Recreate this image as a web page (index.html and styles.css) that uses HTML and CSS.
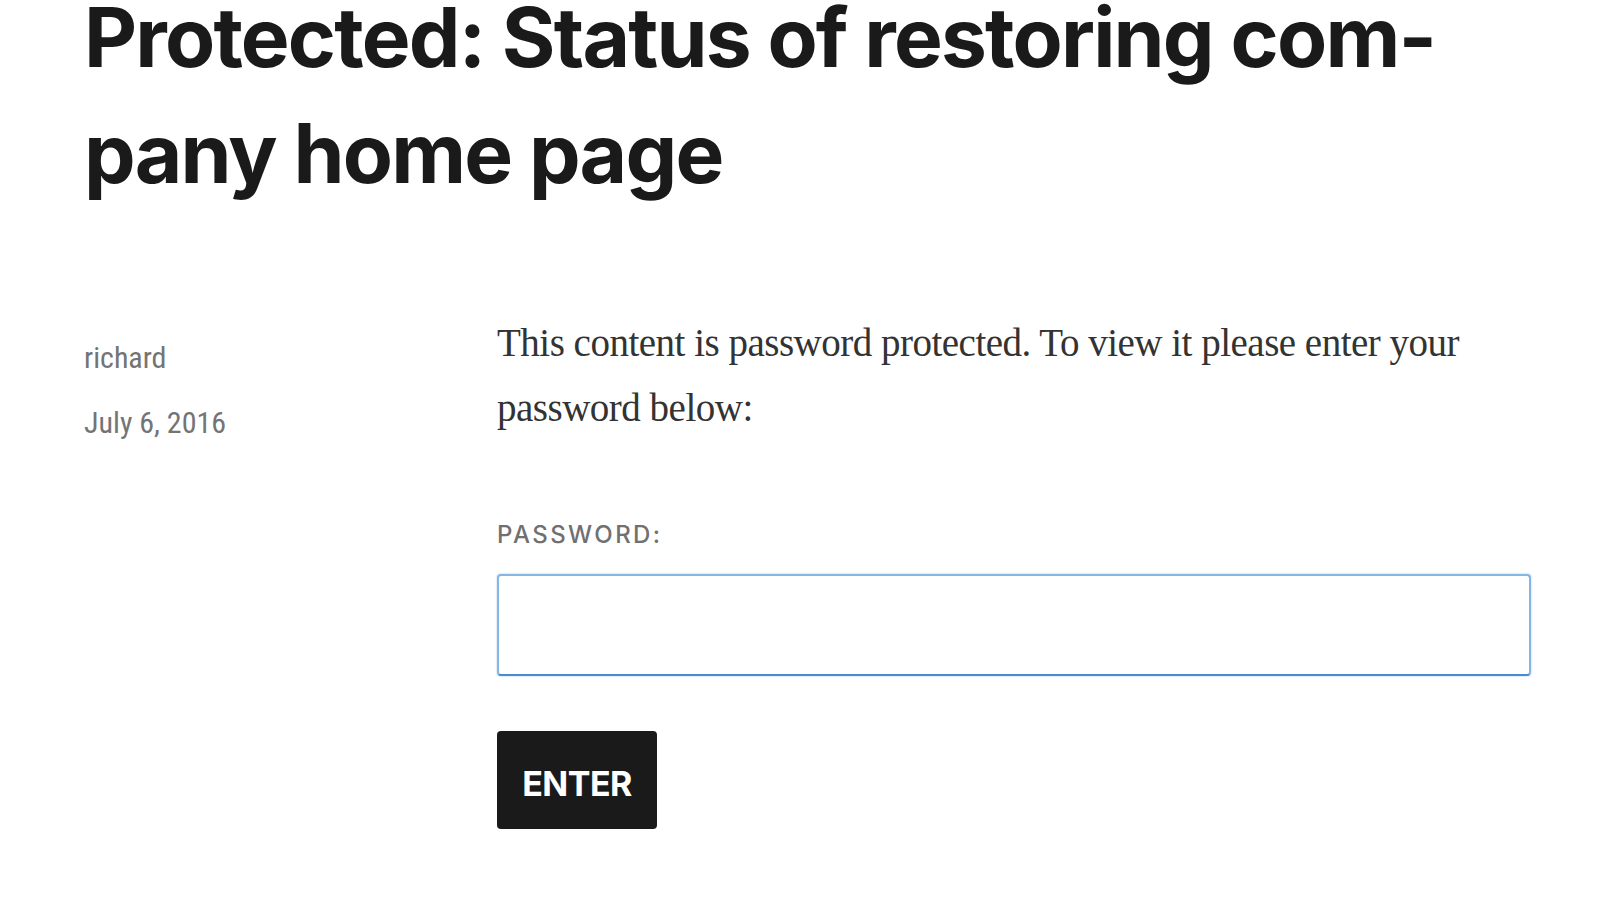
FILE: index.html
```html
<!DOCTYPE html>
<html lang="en">
<head>
    <meta charset="UTF-8">
    <meta name="viewport" content="width=device-width, initial-scale=1.0">
    <title>Protected: Status of restoring company home page</title>
    <link rel="stylesheet" href="styles.css">
</head>
<body>
    <article class="post">
        <h1 class="post-title">Protected: Status of restoring com&shy;pany home page</h1>

        <div class="post-body">
            <div class="post-meta">
                <span class="author">richard</span>
                <span class="date">July 6, 2016</span>
            </div>

            <div class="post-content">
                <form class="password-form" onsubmit="return false;">
                    <p>This content is password protected. To view it please enter your password below:</p>
                    <label for="pwbox">Password:</label>
                    <input type="password" id="pwbox">
                    <button type="submit">Enter</button>
                </form>
            </div>
        </div>
    </article>
</body>
</html>
```
FILE: styles.css
```css
body {
    margin: 0;
    background-color: #fff;
    color: #1a1a1a;
    overflow: hidden;
}
.post {
    padding: 0 69px 0 84px;
}
.post-title {
    font-family: Inter, "Liberation Sans", sans-serif;
    font-size: 82px;
    font-weight: 700;
    line-height: 116px;
    letter-spacing: -0.022em;
    margin: -20px 0 0;
    color: #1a1a1a;
}
.post-body {
    display: flex;
    margin-top: 98px;
}
.post-meta {
    width: 413px;
    flex-shrink: 0;
    display: flex;
    flex-direction: column;
    padding-top: 15px;
    font-family: "Roboto Condensed", Roboto, sans-serif;
    font-size: 30px;
    line-height: 65px;
    color: #747474;
}
.post-content {
    flex: 1;
}
.password-form p {
    font-family: "Liberation Serif", serif;
    font-size: 39px;
    line-height: 65px;
    letter-spacing: -0.5px;
    color: #333;
    margin: 0 0 77px;
}
.password-form label {
    display: block;
    font-family: Inter, "Liberation Sans", sans-serif;
    font-size: 24px;
    font-weight: 500;
    line-height: 36px;
    letter-spacing: 0.1em;
    text-transform: uppercase;
    color: #707070;
    margin-bottom: 21px;
}
.password-form input {
    display: block;
    box-sizing: border-box;
    width: 100%;
    height: 102px;
    margin: 0;
    padding: 10px 16px;
    border: 2px solid #86b6e4;
    border-bottom-color: #4a8ad0;
    border-radius: 4px;
    box-shadow: 0 0 2px rgba(74, 138, 208, 0.5);
    font-size: 30px;
    outline: none;
}
.password-form button {
    display: flex;
    align-items: center;
    justify-content: center;
    box-sizing: border-box;
    width: 160px;
    height: 98px;
    margin-top: 55px;
    padding: 6px 0 0;
    background-color: #1a1a1a;
    color: #fff;
    border: none;
    border-radius: 4px;
    font-family: Inter, "Liberation Sans", sans-serif;
    font-size: 34px;
    font-weight: 700;
    letter-spacing: -0.5px;
    text-transform: uppercase;
    cursor: pointer;
}
```
